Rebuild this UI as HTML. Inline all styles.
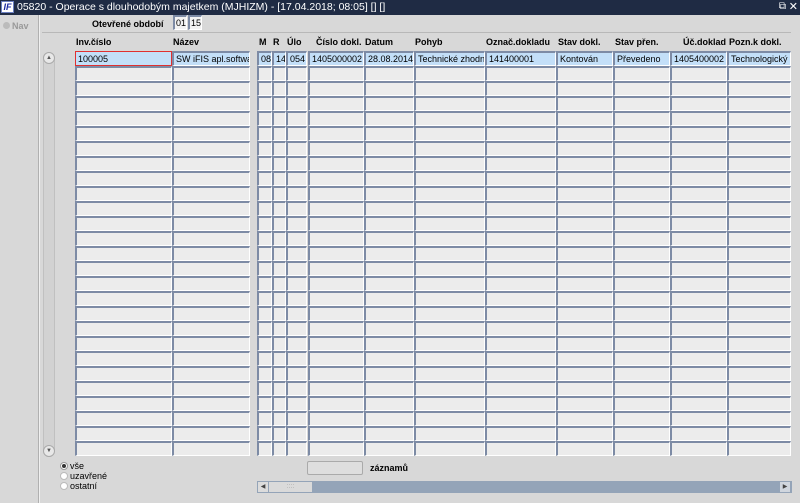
<!DOCTYPE html>
<html><head><meta charset="utf-8"><style>
*{margin:0;padding:0;box-sizing:border-box}
body{width:800px;height:503px;overflow:hidden;background:#d8d8d8;font-family:"Liberation Sans",sans-serif;font-size:9px;color:#000;position:relative}
.a{position:absolute}
.title{left:0;top:0;width:800px;height:15px;background:#1f2b44;color:#fff;font-size:10.5px;line-height:15px;padding-left:17px}
.logo{left:1px;top:1px;width:13px;height:12px;background:#fff;border:1px solid #6b7fc0;color:#1a2aa0;font-style:italic;font-weight:bold;font-size:9px;line-height:10px;text-align:center}
.c{position:absolute;height:15px;background:#ececec;border-top:2px solid #7d8ba5;border-left:2px solid #7d8ba5;border-right:1px solid #fff;border-bottom:1px solid #fff;line-height:13px;padding-left:2px;white-space:nowrap;overflow:hidden;font-size:9px}
.sel{background:#c3dff8}
.h{position:absolute;top:37px;font-weight:bold;font-size:9px}
</style></head><body>
<div class="a title">05820 - Operace s dlouhodobým majetkem (MJHIZM) - [17.04.2018; 08:05] [] []</div>
<div class="a logo">IF</div>
<div class="a" style="right:14px;top:1px;color:#fff;font-size:10px">⧉</div>
<div class="a" style="right:2px;top:0px;color:#fff;font-size:11px">✕</div>
<div class="a" style="left:38px;top:15px;width:1px;height:488px;background:#b0b0b0"></div>
<div class="a" style="left:39px;top:15px;width:1px;height:488px;background:#f0f0f0"></div>
<div class="a" style="left:42px;top:32px;width:749px;height:1px;background:#b8b8b8"></div>
<div class="a" style="left:3px;top:22px;width:7px;height:7px;border-radius:50%;background:#bbb"></div>
<div class="a" style="left:12px;top:21px;color:#999;font-weight:bold;font-size:9px">Nav</div>
<div class="a" style="left:92px;top:19px;font-weight:bold;font-size:9px">Otevřené období</div>
<div class="c" style="left:173px;top:15px;width:14px;height:15px;background:#f2f2f2;padding-left:1px">01</div>
<div class="c" style="left:188px;top:15px;width:14px;height:15px;background:#f2f2f2;padding-left:1px">15</div>
<div class="h" style="left:76px">Inv.číslo</div>
<div class="h" style="left:173px">Název</div>
<div class="h" style="left:259px">M</div>
<div class="h" style="left:273px">R</div>
<div class="h" style="left:287px">Úlo</div>
<div class="h" style="left:316px">Číslo dokl.</div>
<div class="h" style="left:365px">Datum</div>
<div class="h" style="left:415px">Pohyb</div>
<div class="h" style="left:486px">Označ.dokladu</div>
<div class="h" style="left:558px">Stav dokl.</div>
<div class="h" style="left:615px">Stav přen.</div>
<div class="h" style="left:683px">Úč.doklad</div>
<div class="h" style="left:729px">Pozn.k dokl.</div>
<div class="a" style="left:43px;top:52px;width:12px;height:405px;background:#d2d2d2;border:1px solid #c0c0c0;border-radius:6px"></div>
<div class="a" style="left:43px;top:52px;width:12px;height:12px;background:#e8e8e8;border:1px solid #aaa;border-radius:6px;font-size:6px;text-align:center;line-height:10px;color:#555">▲</div>
<div class="a" style="left:43px;top:445px;width:12px;height:12px;background:#e8e8e8;border:1px solid #aaa;border-radius:6px;font-size:6px;text-align:center;line-height:10px;color:#555">▼</div>
<div id="g"></div>
<div class="a" style="left:60px;top:462px;width:8px;height:8px;border-radius:50%;background:#fff;border:1px solid #999"><div class="a" style="left:1px;top:1px;width:4px;height:4px;border-radius:50%;background:#333"></div></div>
<div class="a" style="left:60px;top:472px;width:8px;height:8px;border-radius:50%;background:#fff;border:1px solid #bbb"></div>
<div class="a" style="left:60px;top:482px;width:8px;height:8px;border-radius:50%;background:#fff;border:1px solid #bbb"></div>
<div class="a" style="left:70px;top:461px;font-size:9px">vše</div>
<div class="a" style="left:70px;top:471px;font-size:9px">uzavřené</div>
<div class="a" style="left:70px;top:481px;font-size:9px">ostatní</div>
<div class="a" style="left:307px;top:461px;width:56px;height:14px;background:#dedede;border:1px solid #aaa;border-radius:2px"></div>
<div class="a" style="left:370px;top:463px;font-weight:bold;font-size:9px">záznamů</div>
<div class="a" style="left:257px;top:481px;width:535px;height:12px;background:#94a4b8"></div>
<div class="a" style="left:258px;top:482px;width:10px;height:10px;background:#dcdcdc;font-size:6px;line-height:10px;text-align:center;color:#444">◀</div>
<div class="a" style="left:269px;top:482px;width:43px;height:10px;background:#dadada;color:#aaa;font-size:7px;text-align:center;line-height:9px">::::</div>
<div class="a" style="left:780px;top:482px;width:10px;height:10px;background:#d0d6de;font-size:6px;line-height:10px;text-align:center;color:#444">▶</div>
<script>
var cols=[[75,97],[172,78],[257,15],[272,14],[286,21],[308,56],[364,50],[414,71],[485,71],[556,57],[613,57],[670,57],[727,64]];
var d=["100005","SW iFIS apl.software","08","14","054","1405000002","28.08.2014","Technické zhodnocení","141400001","Kontován","Převedeno","1405400002","Technologický u"];
var right={5:1,11:1};
var h="";
for(var r=0;r<27;r++){var y=51+r*15;
for(var i=0;i<cols.length;i++){var s="left:"+cols[i][0]+"px;top:"+y+"px;width:"+cols[i][1]+"px;";
var t="";var cl="c";
if(r==0){t=d[i];cl+=" sel";if(right[i])s+="text-align:right;padding-right:2px;";if(i==0)s+="border:1px solid #e03030;background:#c3dff8;line-height:14px;";}
h+='<div class="'+cl+'" style="'+s+'">'+t+'</div>';}}
document.getElementById("g").innerHTML=h;
</script>
</body></html>
